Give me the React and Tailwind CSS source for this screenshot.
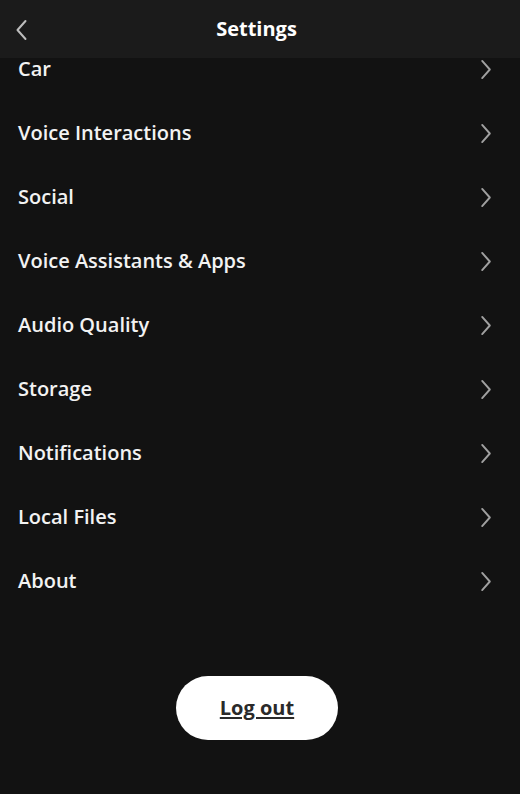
import React from 'react';

const items = [
  'Car',
  'Voice Interactions',
  'Social',
  'Voice Assistants & Apps',
  'Audio Quality',
  'Storage',
  'Notifications',
  'Local Files',
  'About',
];

const Chevron = ({ className }) => (
  <svg className={className} viewBox="0 0 12 22" fill="none" stroke="currentColor" strokeWidth="2" strokeLinecap="round" strokeLinejoin="round">
    <path d="M2 2l8 9-8 9" />
  </svg>
);

const BackChevron = ({ className }) => (
  <svg className={className} viewBox="0 0 12 22" fill="none" stroke="currentColor" strokeWidth="2" strokeLinecap="round" strokeLinejoin="round">
    <path d="M10 2l-8 9 8 9" />
  </svg>
);

const App = () => {
  return (
    <div className="w-[520px] h-[794px] bg-[#121212] text-white font-['Open_Sans',sans-serif] flex flex-col">
      {/* Header */}
      <div className="h-[58px] bg-[#1b1b1b] flex items-center relative shrink-0 pr-[7px]">
        <button className="absolute left-[15px] top-[19px] text-[#bdbdbd]">
          <BackChevron className="w-[13px] h-[22px]" />
        </button>
        <h1 className="w-full text-center text-[20px] font-bold">Settings</h1>
      </div>

      {/* List */}
      <ul className="flex flex-col">
        {items.map((item, i) => (
          <li
            key={item}
            className={`flex items-center justify-between pl-[18px] pr-[28px] h-[64px] ${i === 0 ? '-mt-[21px]' : ''}`}
          >
            <span className="text-[20px] font-semibold text-[#f2f2f2]">{item}</span>
            <Chevron className="w-[12px] h-[21px] text-[#a0a0a0]" />
          </li>
        ))}
      </ul>

      {/* Log out */}
      <div className="flex justify-center mt-[63px] pr-[6px]">
        <button className="w-[162px] h-[64px] rounded-full bg-white text-[#2a2a2a] text-[20px] font-bold underline underline-offset-2">
          Log out
        </button>
      </div>
    </div>
  );
};

export default App;
